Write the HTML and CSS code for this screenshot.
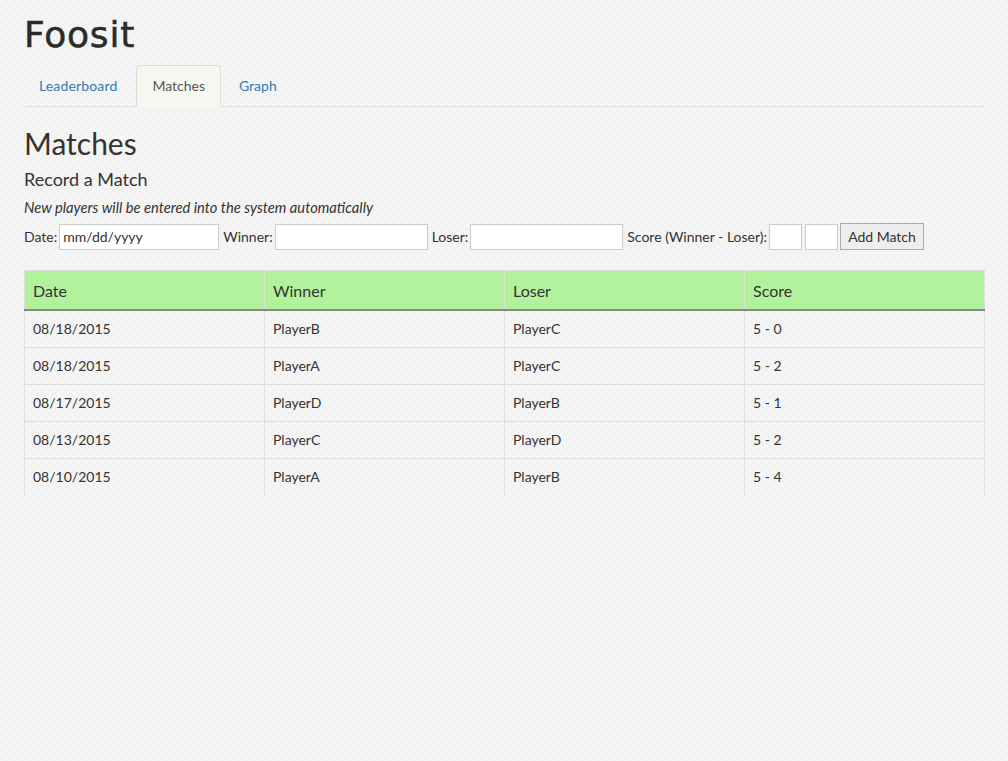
FILE: index.html
```html
<!DOCTYPE html>
<html>
<head>
<meta charset="utf-8">
<title>Foosit</title>
<link rel="stylesheet" href="styles.css">
</head>
<body>
<div class="container">
  <h1 class="brand">Foosit</h1>
  <ul class="tabs">
    <li class="tab"><a href="#">Leaderboard</a></li>
    <li class="tab active"><a href="#">Matches</a></li>
    <li class="tab"><a href="#">Graph</a></li>
  </ul>
  <h2 class="page-title">Matches</h2>
  <h4 class="section-title">Record a Match</h4>
  <p class="note">New players will be entered into the system automatically</p>
  <form class="match-form">
    <label>Date:</label><input class="in-date" type="text" placeholder="mm/dd/yyyy">
    <label>Winner:</label><input class="in-name" type="text">
    <label>Loser:</label><input class="in-name" type="text">
    <label>Score (Winner - Loser):</label><input class="in-score" type="text"><input class="in-score" type="text">
    <button type="button" class="btn">Add Match</button>
  </form>
  <table class="matches">
    <thead>
      <tr><th>Date</th><th>Winner</th><th>Loser</th><th>Score</th></tr>
    </thead>
    <tbody>
      <tr><td>08/18/2015</td><td>PlayerB</td><td>PlayerC</td><td>5 - 0</td></tr>
      <tr><td>08/18/2015</td><td>PlayerA</td><td>PlayerC</td><td>5 - 2</td></tr>
      <tr><td>08/17/2015</td><td>PlayerD</td><td>PlayerB</td><td>5 - 1</td></tr>
      <tr><td>08/13/2015</td><td>PlayerC</td><td>PlayerD</td><td>5 - 2</td></tr>
      <tr><td>08/10/2015</td><td>PlayerA</td><td>PlayerB</td><td>5 - 4</td></tr>
    </tbody>
  </table>
</div>
</body>
</html>
```
FILE: styles.css
```css
html, body {
  margin: 0;
  padding: 0;
}
body {
  font-family: Lato, "Open Sans", sans-serif;
  font-size: 14px;
  line-height: 20px;
  color: #333;
  background-color: #f5f5f5;
  background-image:
    linear-gradient(45deg, rgba(0,0,0,0.012) 25%, transparent 25%, transparent 75%, rgba(0,0,0,0.012) 75%),
    linear-gradient(45deg, rgba(0,0,0,0.012) 25%, transparent 25%, transparent 75%, rgba(0,0,0,0.012) 75%);
  background-size: 8px 8px;
  background-position: 0 0, 4px 4px;
}
.container {
  width: 960px;
  margin: 0 0 0 24px;
}
.brand {
  font-family: "DejaVu Sans", Lato, sans-serif;
  font-weight: 400;
  font-size: 36px;
  line-height: 40px;
  margin: 15px 0 10px;
  letter-spacing: 0.8px;
  color: #2b2b2b;
  -webkit-text-stroke: 0.5px #2b2b2b;
}
.tabs {
  list-style: none;
  margin: 0;
  padding: 0;
  display: flex;
  border-bottom: 1px solid #ddd;
  height: 41px;
}
.tab {
  margin-right: 2px;
  margin-bottom: -1px;
}
.tab a {
  display: block;
  padding: 10px 15px;
  line-height: 20px;
  color: #337ab7;
  text-decoration: none;
  border: 1px solid transparent;
  border-radius: 4px 4px 0 0;
}
.tab:first-child a {
  padding-left: 14px;
  padding-right: 16px;
  letter-spacing: 0.15px;
}
.tab.active a {
  color: #555;
  background: #f5f8ee;
  border-color: #ddd #ddd transparent;
}
.page-title {
  font-size: 30px;
  font-weight: 400;
  line-height: 33px;
  margin: 20px 0 9px;
}
.section-title {
  font-size: 18px;
  font-weight: 400;
  line-height: 20px;
  margin: 0 0 8px;
}
.note {
  font-style: italic;
  font-size: 14.7px;
  margin: 0 0 6px;
}
.match-form {
  display: flex;
  align-items: center;
  height: 27px;
  margin-bottom: 20px;
}
.match-form label {
  margin-right: 2px;
}
.match-form input {
  box-sizing: border-box;
  height: 26px;
  border: 1px solid #ccc;
  background: #fff;
  font-family: Lato, sans-serif;
  font-size: 14px;
  padding: 1px 3px;
  margin: 0 4px 0 0;
  color: #333;
}
.match-form input::placeholder {
  color: #333;
}
.in-date { width: 160px; }
.in-name { width: 153px; }
.match-form .in-score { width: 33px; margin-right: 3px; }
.match-form .in-score + .in-score { margin-right: 2px; }
.btn {
  box-sizing: border-box;
  height: 27px;
  width: 84px;
  font-family: Lato, sans-serif;
  font-size: 14px;
  color: #333;
  background: #eee;
  border: 1px solid #aaa;
  padding: 0 6px;
}
.matches {
  width: 961px;
  border-collapse: collapse;
  table-layout: fixed;
}
.matches th {
  background: #b3f29d;
  font-size: 16px;
  font-weight: 400;
  text-align: left;
  padding: 10px 8px 8px;
  line-height: 20px;
  border-top: 1px solid #ddd;
  border-left: 1px solid #ddd;
  border-right: 1px solid #ddd;
  border-bottom: 2px solid #888;
}
.matches td {
  padding: 8px;
  line-height: 20px;
  border: 1px solid #ddd;
  border-bottom: none;
}
.matches tbody tr + tr td {
  border-top: 1px solid #ddd;
}
.matches tbody tr:last-child td {
  padding-bottom: 9px;
}
```
